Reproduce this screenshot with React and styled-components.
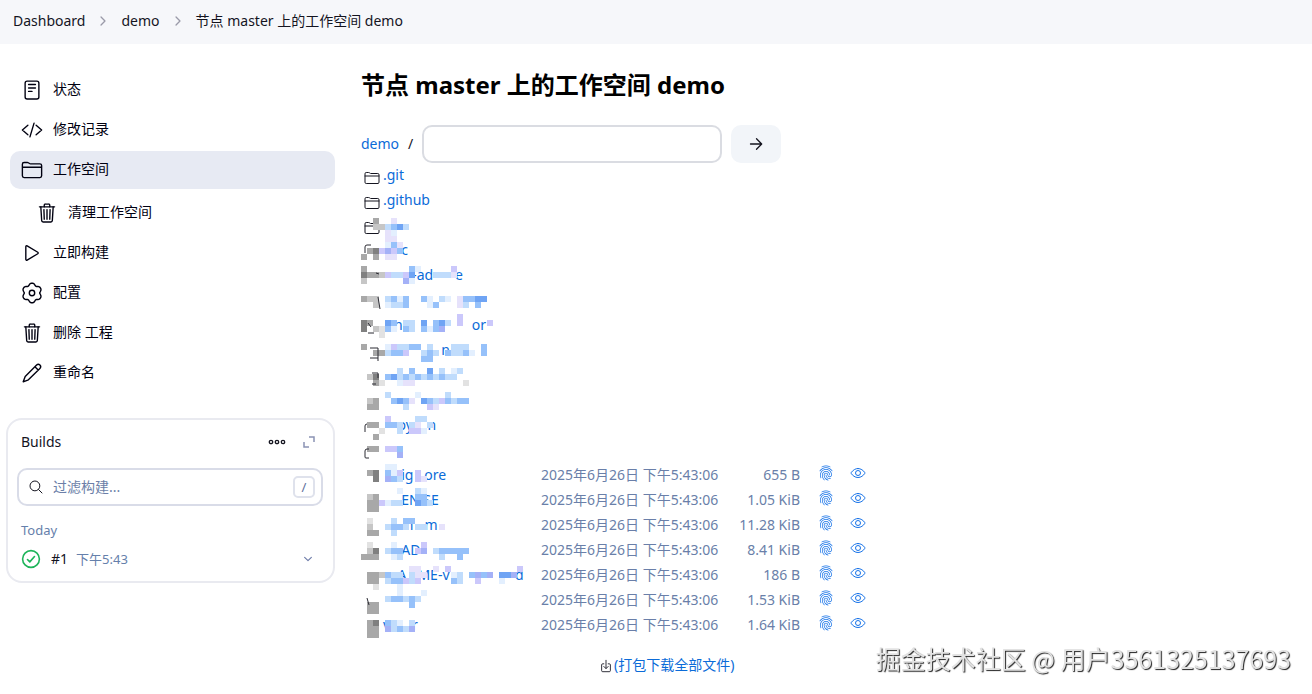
import React, { useState } from 'react';
import styled, { createGlobalStyle } from 'styled-components';
import {
  IoReaderOutline,
  IoCodeSlashOutline,
  IoFolderOutline,
  IoTrashOutline,
  IoPlayOutline,
  IoSearchOutline,
  IoFingerPrintOutline,
  IoEyeOutline,
  IoDownloadOutline,
  IoChevronForwardOutline,
  IoChevronDownOutline,
} from 'react-icons/io5';

const GlobalStyle = createGlobalStyle`
  * { box-sizing: border-box; }
  body {
    margin: 0;
    background: #fff;
    color: #14141f;
    font-family: "Noto Sans", "Noto Sans CJK SC", sans-serif;
    font-size: 14px;
    line-height: 20px;
  }
`;

// six-lobed outline around the centre of a 22px box
const gearPath = Array.from({ length: 72 }, (_, i) => {
  const a = (i / 72) * Math.PI * 2;
  const notch = (1 + Math.cos(6 * a)) / 2;
  const r = 9.8 - 2.1 * notch ** 1.6;
  return `${(11 + r * Math.cos(a)).toFixed(2)} ${(11 + r * Math.sin(a)).toFixed(2)}`;
}).join('L');

const GearIcon = () => (
  <svg viewBox="0 0 22 22" fill="none" stroke="currentColor" strokeWidth="1.4" strokeLinejoin="round">
    <path d={`M${gearPath}Z`} />
    <circle cx="11" cy="11" r="2.7" />
  </svg>
);

const PencilIcon = () => (
  <svg viewBox="0 0 22 22" fill="none" stroke="currentColor" strokeWidth="1.4" strokeLinecap="round" strokeLinejoin="round">
    <path d="M2.2 19.8l2-5.2L15.6 3.1a2.3 2.3 0 0 1 3.3 3.3L7.4 17.8zM13.9 4.8l3.3 3.3" />
  </svg>
);

const menu = [
  { label: '状态', Icon: IoReaderOutline },
  { label: '修改记录', Icon: IoCodeSlashOutline },
  { label: '工作空间', Icon: IoFolderOutline, active: true },
  { label: '清理工作空间', Icon: IoTrashOutline, sub: true },
  { label: '立即构建', Icon: IoPlayOutline },
  { label: '配置', Icon: GearIcon },
  { label: '删除 工程', Icon: IoTrashOutline },
  { label: '重命名', Icon: PencilIcon },
];

const DATE = '2025年6月26日 下午5:43:06';

// names are partly redacted, only the readable letters are kept
const folders = [
  { name: '.git', icon: true },
  { name: '.github', icon: true },
  { name: '', icon: true },
  { name: '     c' },
  { name: '        -ad      e' },
  { name: '' },
  { name: '   n                   or' },
  { name: '                n' },
  { name: '' },
  { name: '' },
  { name: '    oy    n' },
  { name: '' },
];

const files = [
  { name: '     ig   ore', size: '655 B' },
  { name: '     EN SE', size: '1.05 KiB' },
  { name: '      h   m', size: '11.28 KiB' },
  { name: '     AD', size: '8.41 KiB' },
  { name: '    A   ME-v                  d', size: '186 B' },
  { name: '', size: '1.53 KiB' },
  { name: 'v      r', size: '1.64 KiB' },
];

// redaction blocks, one character per 6px cell
const CELL = 6;
const shades = {
  a: '#e3effe', b: '#c0dcfc', c: '#96c1fa', d: '#6fa4f4',
  l: '#e6e2fb', m: '#cbc8fb', n: '#a4b1f7',
  1: '#e2e2e2', 2: '#c6c6c6', 3: '#a8a8a8', 4: '#808080',
};
const blocks = {
  0: '..3..l',
  1: '..22bcdb',
  2: '....la',
  3: '....ll',
  4: '....acl',
  5: '.34mnmc',
  6: '3.3.ll',
  8: '3.......ca.....m',
  9: '4332mbbmd...bbbl',
  10: '2......na',
  13: '322.bcac..ca.ba.lccdd',
  14: '..2.abbc...ac...lb.c',
  16: '................m',
  17: '43..dc.bb.d.cdb.m....m',
  18: '4.21ca.cb.cacn',
  19: '...1',
  21: '3...ambbcc.b...bbb..c',
  22: '..33bccm..bcb.cbbca.c',
  23: '..........cc',
  25: '......b.c..d.b.ab',
  26: '.24.cdbcbcbcbcbb',
  27: '..31..all........1',
  29: '....b....a....b',
  30: '.23..cdcl.dcbmcbcc',
  31: '.33....b...ml',
  33: '....m....bb',
  34: '.33.ccb.bl.b',
  35: '...1..b.mma',
  36: '..3',
  38: '.33.mmc',
  39: '......n',
  41: '....aa',
  42: '.34.cam..m',
  43: '..4.ncb..ml',
  45: '......a..ba',
  46: '.23......cc',
  47: '.33mabb..dcb',
  48: '.33',
  50: '.1...b.cc',
  51: '.2..bccb.bb..l',
  52: '.33..b',
  54: '.1...a....m',
  55: '.24.bcc..mn.bccccc',
  56: '333..ab......b..c',
  58: '........ll..l.m...........m',
  59: '.332cbb.bll....ab.cncn.ddn',
  60: '.33.bccmbm.....cb..m...a',
  61: '..1...a',
  62: '......a...a',
  63: '....bccbcb',
  64: '.33.....c',
  65: '.33',
  67: '.34.cba.b',
  68: '.33.nbcbn',
  69: '.33',
};

const Redaction = () => (
  <Blocks width={162} height={420} viewBox="0 0 162 420" aria-hidden="true">
    {Object.entries(blocks).map(([row, line]) =>
      [...line].map((ch, col) =>
        shades[ch] ? (
          <rect
            key={`${row}-${col}`}
            x={col * CELL}
            y={row * CELL}
            width={CELL}
            height={CELL}
            fill={shades[ch]}
          />
        ) : null
      )
    )}
    <path
      d="M4 35V29q0-2 2-2h4M15 55l3 1M17 79l2 12M7 105l3 4M7 115h6M9 130h8v13M9 140h8M11 155h6v5M11 166h4M4 214v-6q0-2 2-2M8 240H5q-1 0-1-1v-6q0-2 2-2h2M6 380l2 7"
      fill="none"
      stroke="#2b2b33"
    />
  </Blocks>
);

const App = () => {
  const [filter, setFilter] = useState('');
  const [path, setPath] = useState('');

  return (
    <>
      <GlobalStyle />
      <Breadcrumbs aria-label="breadcrumb">
        <Crumb href="#">Dashboard</Crumb>
        <IoChevronForwardOutline />
        <Crumb href="#">demo</Crumb>
        <IoChevronForwardOutline />
        <Crumb href="#">节点 master 上的工作空间 demo</Crumb>
      </Breadcrumbs>

      <Page>
        <Side>
          <Menu>
            {menu.map(({ label, Icon, active, sub }) => (
              <MenuItem key={label} href="#" $active={active} $sub={sub}>
                <Icon />
                {label}
              </MenuItem>
            ))}
          </Menu>

          <Card>
            <CardHead>
              <CardTitle>Builds</CardTitle>
              <IconButton type="button" aria-label="More">
                <svg width="18" height="8" viewBox="0 0 18 8" fill="none" stroke="#14141f" strokeWidth="1.3">
                  <circle cx="3" cy="4" r="1.7" />
                  <circle cx="9" cy="4" r="1.7" />
                  <circle cx="15" cy="4" r="1.7" />
                </svg>
              </IconButton>
              <IconButton type="button" aria-label="Expand">
                <svg width="12" height="12" viewBox="0 0 12 12" fill="none" stroke="#8a93b4" strokeWidth="1.5">
                  <path d="M6 1h5v5M1 6v5h5" />
                </svg>
              </IconButton>
            </CardHead>
            <SearchBox>
              <IoSearchOutline />
              <SearchInput
                aria-label="过滤构建"
                placeholder="过滤构建..."
                value={filter}
                onChange={(e) => setFilter(e.target.value)}
              />
              <Key>/</Key>
            </SearchBox>
            <Day>Today</Day>
            <Build>
              <svg width="20" height="20" viewBox="0 0 20 20" fill="none" stroke="#1eb45a" strokeWidth="1.6">
                <circle cx="10" cy="10" r="8.4" />
                <path d="M6.5 10.5l2.3 2.4 4.7-5.4" strokeLinecap="round" strokeLinejoin="round" />
              </svg>
              <BuildLink href="#">#1</BuildLink>
              <BuildTime>下午5:43</BuildTime>
              <IconButton type="button" aria-label="Details">
                <IoChevronDownOutline size={12} />
              </IconButton>
            </Build>
          </Card>
        </Side>

        <Main>
          <Title>节点 master 上的工作空间 demo</Title>
          <PathForm onSubmit={(e) => e.preventDefault()}>
            <TextLink href="#">demo</TextLink>
            <span>/</span>
            <PathInput aria-label="path" value={path} onChange={(e) => setPath(e.target.value)} />
            <GoButton type="submit" aria-label="Go">
              <svg viewBox="0 0 16 16" fill="none" stroke="currentColor" strokeWidth="1.3" strokeLinecap="round" strokeLinejoin="round">
                <path d="M2.5 8h11M8.5 2.8L13.7 8l-5.2 5.2" />
              </svg>
            </GoButton>
          </PathForm>

          <Listing>
            <Table>
              <tbody>
                {folders.map(({ name, icon }, i) => (
                  <tr key={i}>
                    <IconCell>{icon && <IoFolderOutline />}</IconCell>
                    <NameCell><TextLink href="#">{name}</TextLink></NameCell>
                  </tr>
                ))}
                {files.map(({ name, size }, i) => (
                  <tr key={i}>
                    <IconCell />
                    <NameCell><TextLink href="#">{name}</TextLink></NameCell>
                    <DateCell>{DATE}</DateCell>
                    <SizeCell>{size}</SizeCell>
                    <ActionCell><IconLink href="#" aria-label="fingerprint"><IoFingerPrintOutline /></IconLink></ActionCell>
                    <ActionCell><IconLink href="#" aria-label="view"><IoEyeOutline /></IconLink></ActionCell>
                  </tr>
                ))}
              </tbody>
            </Table>
            <Redaction />
          </Listing>
          <Download>
            <IoDownloadOutline />
            <TextLink href="#">(打包下载全部文件)</TextLink>
          </Download>
        </Main>
      </Page>
      <Watermark>掘金技术社区 @ 用户3561325137693</Watermark>
    </>
  );
};

const Breadcrumbs = styled.nav`
  display: flex;
  align-items: center;
  gap: 11px;
  height: 44px;
  padding: 0 13px 2px;
  background: #f6f7fa;

  svg {
    width: 14px;
    height: 14px;
    color: #9a9aa8;
  }
`;

const Crumb = styled.a`
  color: #14141f;
  text-decoration: none;
`;

const Page = styled.div`
  display: flex;
  align-items: flex-start;
  gap: 26px;
`;

const Side = styled.aside`
  flex: none;
  width: 335px;
  padding-top: 27px;
`;

const Menu = styled.nav`
  display: flex;
  flex-direction: column;
  gap: 2px;
  padding-left: 10px;
`;

const MenuItem = styled.a`
  display: flex;
  align-items: center;
  gap: 10px;
  height: 38px;
  margin-top: ${(p) => (p.$sub ? '3px' : '0')};
  padding-left: ${(p) => (p.$sub ? '26px' : '11px')};
  padding-bottom: 3px;
  border-radius: 10px;
  background: ${(p) => (p.$active ? '#e7eaf3' : 'transparent')};
  color: #000010;
  text-decoration: none;

  svg {
    width: 22px;
    height: 22px;
    margin-top: 2px;
  }
`;

const Card = styled.section`
  margin: 26px 0 0 6px;
  padding: 12px 10px 12px 9px;
  border: 2px solid #e9eaf0;
  border-radius: 16px;
`;

const CardHead = styled.div`
  display: flex;
  align-items: center;
  gap: 17px;
  height: 20px;
  padding: 0 8px 0 4px;
`;

const CardTitle = styled.span`
  flex: 1;
`;

const IconButton = styled.button`
  display: flex;
  padding: 0;
  border: none;
  background: none;
  color: #6c7ba8;
  cursor: pointer;
`;

const SearchBox = styled.div`
  display: flex;
  align-items: center;
  gap: 9px;
  height: 38px;
  margin-top: 16px;
  padding: 0 6px 0 9px;
  border: 2px solid #d9dce8;
  border-radius: 10px;

  svg {
    flex: none;
    width: 16px;
    height: 16px;
  }
`;

const SearchInput = styled.input`
  flex: 1;
  min-width: 0;
  padding: 0;
  border: none;
  outline: none;
  background: none;
  font: inherit;

  &::placeholder {
    color: #6c7fa8;
    opacity: 1;
  }
`;

const Key = styled.kbd`
  width: 22px;
  height: 22px;
  border: 2px solid #dfe2ec;
  border-radius: 5px;
  color: #5f6f9c;
  font: inherit;
  font-size: 13px;
  line-height: 18px;
  text-align: center;
`;

const Day = styled.div`
  margin-top: 14px;
  padding-left: 4px;
  color: #6580ab;
  font-size: 13px;
`;

const Build = styled.div`
  display: flex;
  align-items: center;
  height: 20px;
  margin-top: 9px;
  padding: 0 9px 0 4px;
`;

const BuildLink = styled.a`
  margin: 0 8px 0 10px;
  color: #14141f;
  text-decoration: none;
`;

const BuildTime = styled.span`
  flex: 1;
  color: #6580ab;
  font-size: 13px;
`;

const Main = styled.main`
  flex: 1;
  min-width: 0;
  padding-top: 25px;
`;

const Title = styled.h1`
  margin: 0 0 24px;
  color: #000;
  font-size: 24px;
  line-height: 32px;
`;

const TextLink = styled.a`
  color: #0b6bd8;
  text-decoration: none;
`;

const IconLink = styled(TextLink)`
  color: #1672e8;
`;

const PathForm = styled.form`
  display: flex;
  align-items: center;
  gap: 9px;
`;

const PathInput = styled.input`
  width: 300px;
  height: 38px;
  padding: 0 10px;
  border: 2px solid #dadce2;
  border-radius: 10px;
  font: inherit;
`;

const GoButton = styled.button`
  display: flex;
  align-items: center;
  justify-content: center;
  width: 50px;
  height: 38px;
  border: none;
  border-radius: 10px;
  background: #f2f5f9;
  color: #14141f;

  svg {
    width: 16px;
    height: 16px;
  }
`;

const Listing = styled.div`
  position: relative;
`;

const Table = styled.table`
  border-collapse: collapse;

  tr {
    height: 25px;
  }

  td {
    padding: 0 0 2px;
    white-space: pre;
  }

  svg {
    display: block;
  }
`;

const IconCell = styled.td`
  width: 22px;

  svg {
    width: 16px;
    height: 16px;
    margin: 7px 0 0 3px;
  }
`;

const NameCell = styled.td`
  width: 158px;
`;

const DateCell = styled.td`
  width: 180px;
  color: #6a7fa9;
`;

const SizeCell = styled.td`
  width: 79px;
  color: #6a7fa9;
  text-align: right;
`;

const ActionCell = styled.td`
  width: 32px;

  &:nth-child(5) {
    width: 34px;
  }

  svg {
    width: 16px;
    height: 16px;
    margin: 0 0 4px auto;
  }
`;

const Blocks = styled.svg`
  position: absolute;
  top: 55px;
  left: 0;
  pointer-events: none;
`;

const Download = styled.div`
  display: flex;
  align-items: center;
  gap: 1px;
  margin-top: 17px;
  padding-left: 238px;

  svg {
    width: 14px;
    height: 14px;
    margin-top: 2px;
    stroke-width: 20px;
  }
`;

const Watermark = styled.div`
  position: fixed;
  right: 21px;
  bottom: 20px;
  color: #e2e2e2;
  font-family: "Noto Sans CJK SC", sans-serif;
  font-size: 25px;
  line-height: 32px;
  text-shadow: 1px 1px 1px #222;
`;

export default App;
